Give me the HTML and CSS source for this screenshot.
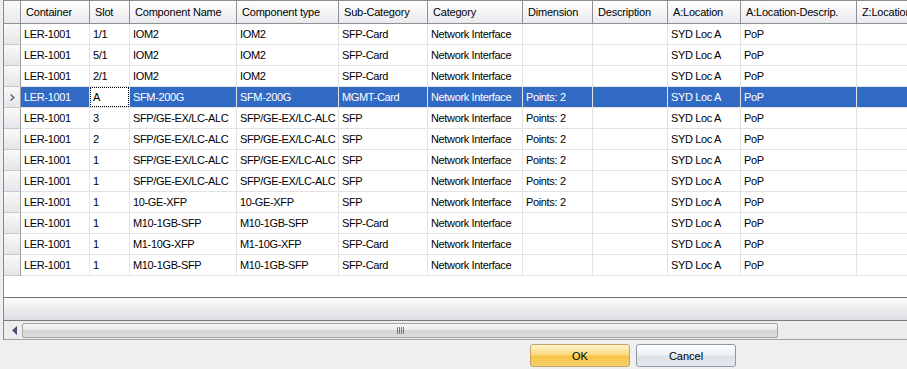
FILE: index.html
```html
<!DOCTYPE html>
<html lang="en">
<head>
    <meta charset="UTF-8">
    <meta name="viewport" content="width=device-width, initial-scale=1.0">
    <title>Components</title>
    <link rel="stylesheet" href="styles.css">
</head>
<body>
    <div class="grid">
        <div class="row head">
            <div class="cell rh"></div>
            <div class="cell">Container</div>
            <div class="cell">Slot</div>
            <div class="cell">Component Name</div>
            <div class="cell">Component type</div>
            <div class="cell">Sub-Category</div>
            <div class="cell">Category</div>
            <div class="cell">Dimension</div>
            <div class="cell">Description</div>
            <div class="cell">A:Location</div>
            <div class="cell">A:Location-Descrip.</div>
            <div class="cell">Z:Location</div>
        </div>
        <div id="rows"></div>
        <div class="empty"></div>
        <div class="footer"></div>
        <div class="hscroll">
            <div class="arrow">
                <svg width="5" height="9" viewBox="0 0 5 9"><path d="M5 0 L0 4.5 L5 9 Z" fill="#43516f"/></svg>
            </div>
            <div class="thumb"><div class="grip"></div></div>
        </div>
    </div>
    <div class="buttons">
        <button class="btn ok">OK</button>
        <button class="btn cancel">Cancel</button>
    </div>

    <script>
        const data = [
            ['1/1', 'IOM2', 'IOM2', 'SFP-Card', ''],
            ['5/1', 'IOM2', 'IOM2', 'SFP-Card', ''],
            ['2/1', 'IOM2', 'IOM2', 'SFP-Card', ''],
            ['A', 'SFM-200G', 'SFM-200G', 'MGMT-Card', 'Points: 2'],
            ['3', 'SFP/GE-EX/LC-ALC', 'SFP/GE-EX/LC-ALC', 'SFP', 'Points: 2'],
            ['2', 'SFP/GE-EX/LC-ALC', 'SFP/GE-EX/LC-ALC', 'SFP', 'Points: 2'],
            ['1', 'SFP/GE-EX/LC-ALC', 'SFP/GE-EX/LC-ALC', 'SFP', 'Points: 2'],
            ['1', 'SFP/GE-EX/LC-ALC', 'SFP/GE-EX/LC-ALC', 'SFP', 'Points: 2'],
            ['1', '10-GE-XFP', '10-GE-XFP', 'SFP', 'Points: 2'],
            ['1', 'M10-1GB-SFP', 'M10-1GB-SFP', 'SFP-Card', ''],
            ['1', 'M1-10G-XFP', 'M1-10G-XFP', 'SFP-Card', ''],
            ['1', 'M10-1GB-SFP', 'M10-1GB-SFP', 'SFP-Card', '']
        ];
        const selected = 3;
        const chevron = '<svg width="6" height="9" viewBox="0 0 6 9"><path d="M0.5 0.5 L5 4.5 L0.5 8.5 L0.5 6.5 L2.8 4.5 L0.5 2.5 Z" fill="#6b6b7e"/></svg>';

        let html = '';
        data.forEach(function (r, i) {
            const sel = i === selected;
            const values = ['LER-1001', r[0], r[1], r[2], r[3], 'Network Interface', r[4], '', 'SYD Loc A', 'PoP', ''];
            html += '<div class="row' + (sel ? ' selected' : '') + '">';
            html += '<div class="cell rh">' + (sel ? chevron : '') + '</div>';
            values.forEach(function (v, c) {
                html += '<div class="cell' + (sel && c === 1 ? ' focus' : '') + '">' + v + '</div>';
            });
            html += '</div>';
        });
        document.getElementById('rows').innerHTML = html;
    </script>
</body>
</html>
```

FILE: styles.css
```css
body {
    margin: 0;
    background: #efeff2;
    font-family: "Liberation Sans", Arial, sans-serif;
    font-size: 11px;
    color: #000;
    overflow: hidden;
}
.grid {
    margin-left: 3px;
    border-top: 1px solid #8e8f94;
    border-left: 1px solid #828790;
    border-bottom: 1px solid #a3a3a3;
    background: #fff;
    overflow: hidden;
}
.row {
    display: grid;
    grid-template-columns: 17px 69px 40px 107px 102px 89px 95px 70px 75px 73px 116px 100px;
    width: max-content;
    height: 21px;
}
.cell {
    box-sizing: border-box;
    position: relative;
    border-right: 1px solid #e3e3e3;
    border-bottom: 1px solid #e3e3e3;
    padding: 0 0 0 3px;
    line-height: 20px;
    letter-spacing: -0.35px;
    white-space: nowrap;
    overflow: hidden;
}
.cell.rh {
    padding: 0;
    background: linear-gradient(#f9f9fa, #e6e6ea);
    border-right: 1px solid #9d9d9d;
    border-bottom: 1px solid #c9c9cc;
    display: flex;
    align-items: center;
    justify-content: center;
}
.head {
    height: 23px;
}
.head .cell {
    background: linear-gradient(#ffffff, #ebebee);
    border-right: 1px solid #8e8f94;
    border-bottom: 1px solid #8e8f94;
    padding-left: 5px;
    line-height: 22px;
    letter-spacing: -0.2px;
}
.head .cell.rh {
    background: linear-gradient(#fafafb, #e9e9ec);
}
.selected .cell {
    background: #316ac5;
    color: #fff;
}
.selected .cell.rh {
    background: linear-gradient(#f9f9fa, #e6e6ea);
    padding-left: 2px;
}
.selected .cell.focus {
    background: #fff;
    color: #000;
}
.focus::after {
    content: "";
    position: absolute;
    top: 0;
    left: 0;
    right: 0;
    bottom: 0;
    border: 1px dotted #000;
}
.empty {
    height: 21px;
}
.footer {
    height: 22px;
    border-top: 1px solid #727272;
    border-bottom: 1px solid #7a7a7a;
    background: linear-gradient(#fbfbfc, #f0f0f2 40%, #dcdde2);
}
.hscroll {
    height: 18px;
    display: flex;
    align-items: center;
    background: linear-gradient(#eeeeee, #ececec);
}
.arrow {
    width: 18px;
    display: flex;
    justify-content: center;
    padding-left: 2px;
    box-sizing: border-box;
}
.thumb {
    width: 756px;
    height: 15px;
    box-sizing: border-box;
    border: 1px solid #a5a5a5;
    border-radius: 2px;
    background: linear-gradient(#f6f6f6, #e9e9e9 45%, #d6d6d6 50%, #dcdcdc);
    display: flex;
    align-items: center;
    justify-content: center;
}
.grip {
    width: 7px;
    height: 7px;
    background: repeating-linear-gradient(90deg, #787878 0 1px, transparent 1px 2px);
}
.buttons {
    display: flex;
    gap: 6px;
    padding: 4px 0 0 530px;
}
.btn {
    width: 100px;
    height: 23px;
    border-radius: 3px;
    font-family: "Liberation Sans", Arial, sans-serif;
    font-size: 11px;
    color: #000;
    padding: 0;
}
.ok {
    border: 1px solid #c2a466;
    background: linear-gradient(#fff3c9, #fbdb84 45%, #f6c444 55%, #f8d272);
}
.cancel {
    border: 1px solid #8d97a6;
    background: linear-gradient(#ffffff, #eef0f4 45%, #dde1e8 55%, #e6e9ee);
}
```
